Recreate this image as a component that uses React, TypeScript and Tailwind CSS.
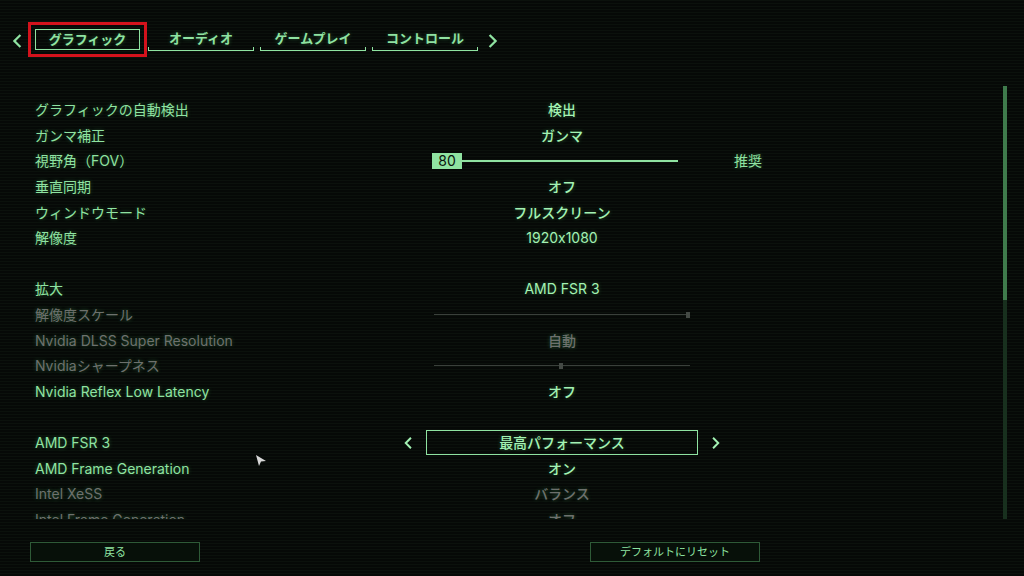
import React from "react";

type Row =
  | { kind: "blank" }
  | {
      kind: "text" | "slider" | "track" | "select";
      label: string;
      value?: string;
      dim?: boolean;
      thumb?: number;
      extra?: string;
    };

const ROWS: Row[] = [
  { kind: "text", label: "グラフィックの自動検出", value: "検出" },
  { kind: "text", label: "ガンマ補正", value: "ガンマ" },
  { kind: "slider", label: "視野角（FOV）", value: "80", extra: "推奨" },
  { kind: "text", label: "垂直同期", value: "オフ" },
  { kind: "text", label: "ウィンドウモード", value: "フルスクリーン" },
  { kind: "text", label: "解像度", value: "1920x1080" },
  { kind: "blank" },
  { kind: "text", label: "拡大", value: "AMD FSR 3" },
  { kind: "track", label: "解像度スケール", dim: true, thumb: 100 },
  { kind: "text", label: "Nvidia DLSS Super Resolution", value: "自動", dim: true },
  { kind: "track", label: "Nvidiaシャープネス", dim: true, thumb: 50 },
  { kind: "text", label: "Nvidia Reflex Low Latency", value: "オフ" },
  { kind: "blank" },
  { kind: "select", label: "AMD FSR 3", value: "最高パフォーマンス" },
  { kind: "text", label: "AMD Frame Generation", value: "オン" },
  { kind: "text", label: "Intel XeSS", value: "バランス", dim: true },
  { kind: "text", label: "Intel Frame Generation", value: "オフ", dim: true },
];

const TABS = ["オーディオ", "ゲームプレイ", "コントロール"];

function Chevron({ dir, className }: { dir: "left" | "right"; className?: string }) {
  return (
    <svg viewBox="0 0 12 16" className={className}>
      <polyline
        points={dir === "left" ? "9,2 3,8 9,14" : "3,2 9,8 3,14"}
        fill="none"
        stroke="currentColor"
        strokeWidth={2.6}
        strokeLinecap="square"
      />
    </svg>
  );
}

function SettingRow({ row }: { row: Row }) {
  if (row.kind === "blank") return <div className="h-[25.6px]" />;
  const labelColor = row.dim ? "text-[#6d716d]" : "text-[#8fe3a1]";
  const valueColor = row.dim ? "text-[#6d716d]" : "text-[#a3f2b3]";
  // latin values are set in a lighter weight than the kana ones
  const latin = /^[\x00-\x7f]+$/.test(row.value ?? "");
  return (
    <div className="flex h-[25.6px] items-center">
      <div className={`w-[432px] pl-[35px] ${labelColor}`}>{row.label}</div>
      <div className="flex w-[260px] items-center justify-center">
        {row.kind === "text" && (
          <span className={`${latin ? "font-normal" : "font-medium"} ${valueColor}`}>{row.value}</span>
        )}
        {row.kind === "slider" && (
          <div className="flex w-full items-center">
            <div className="flex h-[16px] w-[30px] items-center justify-center bg-[#8fe3a1] text-[14px] leading-none text-[#0a140c] [text-shadow:none]">
              {row.value}
            </div>
            <div className="h-[2px] w-[216px] bg-[#8fe3a1]" />
          </div>
        )}
        {row.kind === "track" && (
          <div className="relative flex h-[8px] w-full items-center pl-[2px]">
            <div className="h-[1px] w-[256px] bg-[#3a403b]" />
            <div
              className="absolute top-[1px] h-[6px] w-[4px] bg-[#444a45]"
              style={{ left: `${(row.thumb ?? 0) * 2.54}px` }}
            />
          </div>
        )}
        {row.kind === "select" && (
          <div className="-mx-[32px] flex shrink-0 items-center gap-[10px]">
            <Chevron dir="left" className="h-[12px] w-[16px] text-[#a3f2b3]" />
            <div className="flex h-[25px] w-[272px] items-center justify-center border border-[#8fe3a1] font-medium text-[#a3f2b3]">
              {row.value}
            </div>
            <Chevron dir="right" className="h-[12px] w-[16px] text-[#a3f2b3]" />
          </div>
        )}
      </div>
      {row.extra && (
        <div className="w-[112px] text-center text-[#8fe3a1]">{row.extra}</div>
      )}
    </div>
  );
}

export default function App() {
  return (
    <div
      className="relative flex h-[576px] w-[1024px] flex-col overflow-hidden bg-[#070b08] bg-[repeating-linear-gradient(to_bottom,#0b110c_0px,#0b110c_1px,#060907_1px,#060907_3px)] text-[14px] [font-feature-settings:'calt'_0] [text-shadow:0_0_4px_rgba(110,255,150,0.3)]"
      style={{ fontFamily: 'Inter, "Noto Sans CJK JP", sans-serif' }}
    >
      {/* tab bar */}
      <div className="flex h-[84px] items-start pt-[22px] pl-[11px]">
        <Chevron dir="left" className="mt-[12px] mr-[5px] h-[14px] w-[12px] text-[#8fe3a1]" />
        <div className="border-[3px] border-[#d3121c] p-[4px]">
          <div className="flex h-[21px] w-[105px] items-center justify-center border border-[#8fe3a1] text-[13px] font-bold text-[#8fe3a1]">
            グラフィック
          </div>
        </div>
        <div className="mt-[8px] flex gap-[6px]">
          {TABS.map((t, i) => (
            <div key={t} className={`flex w-[106px] flex-col ${i === 0 ? "ml-[1px]" : ""}`}>
              <div className="flex h-[17px] items-center justify-center text-[13px] font-bold text-[#8fe3a1]">
                {t}
              </div>
              <div className="h-[4px] border-x border-b border-[#8fe3a1]" />
            </div>
          ))}
        </div>
        <Chevron dir="right" className="mt-[12px] ml-[9px] h-[14px] w-[12px] text-[#8fe3a1]" />
      </div>

      {/* settings list + scrollbar */}
      <div className="flex h-[435px]">
        <div className="flex-1 overflow-hidden pt-[13px]">
          {ROWS.map((r, i) => (
            <SettingRow key={i} row={r} />
          ))}
        </div>
        <div className="mr-[17px] mt-[2px] flex w-[4px] flex-col">
          <div className="h-[214px] bg-[#3f7b4c]" />
          <div className="h-[220px] bg-[#18301e]" />
        </div>
      </div>

      {/* footer */}
      <div className="flex pt-[23px]">
        <button className="ml-[30px] flex h-[20px] w-[170px] items-center justify-center border border-[#2e5a37] bg-[#071009] text-[11px] text-[#8fe3a1]">
          戻る
        </button>
        <button className="ml-[390px] flex h-[20px] w-[170px] items-center justify-center border border-[#2e5a37] bg-[#071009] text-[11px] text-[#8fe3a1]">
          デフォルトにリセット
        </button>
      </div>

      {/* mouse cursor */}
      <svg viewBox="0 0 10 12" className="absolute left-[256px] top-[455px] h-[12px] w-[10px]">
        <polygon points="0,0 10,6 5,6.5 3,11" fill="#d8d8d8" />
      </svg>
    </div>
  );
}
